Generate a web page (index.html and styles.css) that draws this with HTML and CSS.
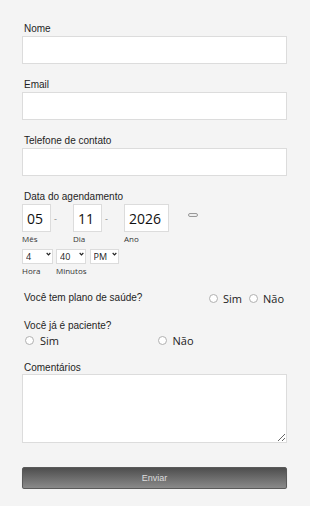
FILE: index.html
```html
<!DOCTYPE html>
<html lang="pt">
<head>
<meta charset="utf-8">
<link rel="stylesheet" href="styles.css">
</head>
<body>
<form class="form">
  <div class="field">
    <label class="label">Nome</label>
    <input class="text-input" type="text">
  </div>
  <div class="field">
    <label class="label">Email</label>
    <input class="text-input" type="text">
  </div>
  <div class="field">
    <label class="label">Telefone de contato</label>
    <input class="text-input" type="text">
  </div>
  <div class="field date-field">
    <label class="label">Data do agendamento</label>
    <div class="date-row">
      <div class="date-part">
        <input class="date-box w2" type="text" value="05">
        <span class="sub-label">Mês</span>
      </div>
      <span class="dash">-</span>
      <div class="date-part">
        <input class="date-box w2" type="text" value="11">
        <span class="sub-label">Dia</span>
      </div>
      <span class="dash">-</span>
      <div class="date-part">
        <input class="date-box w4" type="text" value="2026">
        <span class="sub-label">Ano</span>
      </div>
      <span class="pill"></span>
    </div>
    <div class="time-row">
      <div class="time-part">
        <div class="select-wrap s1">
          <select class="select"><option>4</option></select>
          <svg class="chev" viewBox="0 0 6 4" width="5" height="4"><path d="M0.8 0.8 L3 3 L5.2 0.8" fill="none" stroke="#222" stroke-width="1.4"/></svg>
        </div>
        <span class="sub-label">Hora</span>
      </div>
      <div class="time-part">
        <div class="select-wrap s2">
          <select class="select"><option>40</option></select>
          <svg class="chev" viewBox="0 0 6 4" width="5" height="4"><path d="M0.8 0.8 L3 3 L5.2 0.8" fill="none" stroke="#222" stroke-width="1.4"/></svg>
        </div>
        <span class="sub-label">Minutos</span>
      </div>
      <div class="time-part">
        <div class="select-wrap s3">
          <select class="select"><option>PM</option></select>
          <svg class="chev" viewBox="0 0 6 4" width="5" height="4"><path d="M0.8 0.8 L3 3 L5.2 0.8" fill="none" stroke="#222" stroke-width="1.4"/></svg>
        </div>
      </div>
    </div>
  </div>
  <div class="inline-question">
    <span class="label">Você tem plano de saúde?</span>
    <div class="radio-group">
      <label class="radio"><input type="radio" name="plano"><span>Sim</span></label>
      <label class="radio"><input type="radio" name="plano"><span>Não</span></label>
    </div>
  </div>
  <div class="question">
    <span class="label">Você já é paciente?</span>
    <div class="radio-cols">
      <label class="radio"><input type="radio" name="paciente"><span>Sim</span></label>
      <label class="radio"><input type="radio" name="paciente"><span>Não</span></label>
    </div>
  </div>
  <div class="comments">
    <label class="label">Comentários</label>
    <textarea class="textarea"></textarea>
  </div>
  <button type="button" class="submit">Enviar</button>
</form>
</body>
</html>
```

FILE: styles.css
```css
html, body {
  margin: 0;
  padding: 0;
  background: #f4f4f4;
}

.form {
  width: 265px;
  padding: 23px 0 0 22px;
}

.label {
  display: block;
  font-family: "Liberation Sans", Arial, sans-serif;
  font-size: 10px;
  line-height: 12px;
  color: #1e1e1e;
  padding-left: 2px;
}

.field {
  margin-bottom: 15px;
}

.field .label {
  margin-bottom: 1px;
}

.text-input {
  display: block;
  box-sizing: border-box;
  width: 265px;
  height: 28px;
  margin: 0;
  border: 1px solid #dcdcdc;
  background: #fff;
  outline: none;
}

.date-field {
  margin-bottom: 0;
}

.date-row {
  display: flex;
  align-items: flex-start;
}

.date-part {
  display: flex;
  flex-direction: column;
}

.date-box {
  box-sizing: border-box;
  height: 28px;
  margin: 0;
  padding: 0 0 0 4px;
  border: 1px solid #dcdcdc;
  background: #fff;
  font-family: "Open Sans", sans-serif;
  font-size: 14px;
  color: #111;
  outline: none;
}

.w2 { width: 29px; }
.w4 { width: 45px; }

.dash {
  width: 19px;
  padding-left: 3px;
  padding-top: 9px;
  font-family: "Open Sans", sans-serif;
  font-size: 9px;
  line-height: 12px;
  color: #888;
}

.pill {
  box-sizing: border-box;
  width: 10px;
  height: 4px;
  margin: 9px 0 0 19px;
  border: 1px solid #999;
  border-radius: 3px;
  background: #eee;
}

.sub-label {
  display: block;
  margin-top: 1px;
  font-family: "Open Sans", sans-serif;
  font-size: 8px;
  line-height: 11px;
  color: #333;
}

.time-row {
  display: flex;
  gap: 3px;
  margin-top: 2px;
}

.time-part {
  display: flex;
  flex-direction: column;
}

.time-part .sub-label {
  margin-top: 4px;
}

.select-wrap {
  position: relative;
  height: 15px;
}

.s1 { width: 31px; }
.s2 { width: 30px; }
.s3 { width: 29px; }

.select {
  appearance: none;
  -webkit-appearance: none;
  box-sizing: border-box;
  width: 100%;
  height: 15px;
  margin: 0;
  padding: 0 0 0 3px;
  border: 1px solid #dcdcdc;
  border-radius: 0;
  background: #fff;
  font-family: "Open Sans", sans-serif;
  font-size: 9px;
  line-height: 13px;
  color: #222;
  outline: none;
}

.chev {
  position: absolute;
  right: 2px;
  top: 6px;
}

.inline-question {
  display: flex;
  justify-content: space-between;
  align-items: center;
  margin-top: 16px;
  height: 12px;
}

.radio-group {
  display: flex;
  gap: 7px;
  padding-right: 3px;
}

.radio {
  display: flex;
  align-items: center;
  font-family: "Open Sans", sans-serif;
  font-size: 11px;
  line-height: 13px;
  color: #222;
}

.radio input {
  appearance: none;
  -webkit-appearance: none;
  box-sizing: border-box;
  width: 9px;
  height: 9px;
  margin: 0 5px 0 0;
  border: 1px solid #b0b0b0;
  border-radius: 50%;
  background: #fff;
}

.question {
  margin-top: 16px;
}

.radio-cols {
  display: grid;
  grid-template-columns: 1fr 1fr;
  margin-top: 2px;
}

.radio-cols .radio {
  padding-left: 3px;
}

.radio-cols .radio input {
  margin-right: 6px;
}

.comments {
  margin-top: 15px;
}

.textarea {
  display: block;
  box-sizing: border-box;
  width: 265px;
  height: 69px;
  margin: 0;
  border: 1px solid #dcdcdc;
  background: #fff;
  outline: none;
}

.submit {
  display: block;
  box-sizing: border-box;
  width: 265px;
  height: 22px;
  margin: 24px 0 0 0;
  border: 1px solid #5a5a5a;
  border-radius: 2px;
  background: linear-gradient(to bottom, #4e4e4e, #8a8a8a);
  box-shadow: 0 1px 1px rgba(0,0,0,0.2);
  font-family: "Liberation Sans", Arial, sans-serif;
  font-size: 9px;
  color: #ddd;
  padding: 0;
}
```
